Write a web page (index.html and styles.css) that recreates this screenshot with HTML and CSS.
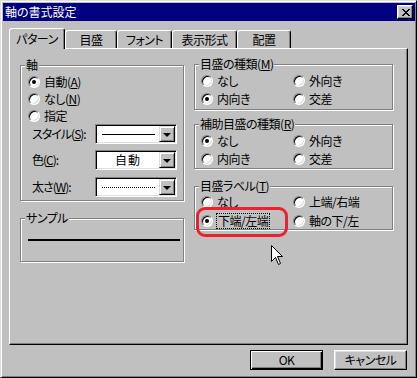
FILE: index.html
```html
<!DOCTYPE html>
<html lang="ja">
<head>
<meta charset="utf-8">
<title>軸の書式設定</title>
<link rel="stylesheet" href="styles.css">
</head>
<body>
<div class="window">
  <div class="titlebar">
    <span class="title">軸の書式設定</span>
    <span class="close">
      <svg width="8" height="7" viewBox="0 0 8 7"><path d="M0 0h2v1h-2zM6 0h2v1h-2zM1 1h2v1h-2zM5 1h2v1h-2zM2 2h4v1h-4zM3 3h2v1h-2zM2 4h4v1h-4zM1 5h2v1h-2zM5 5h2v1h-2zM0 6h2v1h-2zM6 6h2v1h-2z" fill="#000"/></svg>
    </span>
  </div>
  <div class="body">
    <div class="tabs">
      <div class="tab active w56">パターン</div>
      <div class="tab w52">目盛</div>
      <div class="tab w55">フォント</div>
      <div class="tab w65">表示形式</div>
      <div class="tab w54">配置</div>
    </div>
    <div class="panel">
      <div class="col-left">
        <div class="group g-axis">
          <span class="legend">軸</span>
          <div class="radio-row"><span class="rb checked"></span><span>自動(<u>A</u>)</span></div>
          <div class="radio-row"><span class="rb"></span><span>なし(<u>N</u>)</span></div>
          <div class="radio-row"><span class="rb"></span><span>指定</span></div>
          <div class="field"><span class="flabel">スタイル(<u>S</u>):</span>
            <span class="combo"><span class="cval"><span class="line-solid"></span></span><span class="drop"><span class="arrow"></span></span></span>
          </div>
          <div class="field f2"><span class="flabel">色(<u>C</u>):</span>
            <span class="combo"><span class="cval">自動</span><span class="drop"><span class="arrow"></span></span></span>
          </div>
          <div class="field f3"><span class="flabel">太さ(<u>W</u>):</span>
            <span class="combo"><span class="cval"><span class="line-dot"></span></span><span class="drop"><span class="arrow"></span></span></span>
          </div>
        </div>
        <div class="group g-sample">
          <span class="legend">サンプル</span>
          <div class="sample-line"></div>
        </div>
      </div>
      <div class="col-right">
        <div class="group g-r g1">
          <span class="legend">目盛の種類(<u>M</u>)</span>
          <div class="grid2">
            <div class="radio-row r18"><span class="rb"></span><span>なし</span></div>
            <div class="radio-row r18"><span class="rb"></span><span>外向き</span></div>
            <div class="radio-row r18"><span class="rb checked"></span><span>内向き</span></div>
            <div class="radio-row r18"><span class="rb"></span><span>交差</span></div>
          </div>
        </div>
        <div class="group g-r g2">
          <span class="legend">補助目盛の種類(<u>R</u>)</span>
          <div class="grid2">
            <div class="radio-row r18"><span class="rb checked"></span><span>なし</span></div>
            <div class="radio-row r18"><span class="rb"></span><span>外向き</span></div>
            <div class="radio-row r18"><span class="rb"></span><span>内向き</span></div>
            <div class="radio-row r18"><span class="rb"></span><span>交差</span></div>
          </div>
        </div>
        <div class="group g-r g3">
          <span class="legend">目盛ラベル(<u>T</u>)</span>
          <div class="grid2 gap1">
            <div class="radio-row r18"><span class="rb"></span><span>なし</span></div>
            <div class="radio-row r18"><span class="rb"></span><span>上端/右端</span></div>
            <div class="radio-row r18"><span class="rb checked"></span><span class="focus">下端/左端</span></div>
            <div class="radio-row r18"><span class="rb"></span><span>軸の下/左</span></div>
          </div>
        </div>
      </div>
      <div class="highlight"></div>
      <svg class="cursor" width="12" height="20" viewBox="0 0 12 20">
        <path d="M0.5 0.5 L0.5 16.5 L4.5 12.5 L7.5 19.5 L9.5 18.5 L6.5 11.5 L11.5 11.5 Z" fill="#fff" stroke="#000" stroke-width="1"/>
      </svg>
    </div>
    <div class="buttons">
      <div class="btn default"><span>OK</span></div>
      <div class="btn">キャンセル</div>
    </div>
  </div>
</div>
</body>
</html>
```
FILE: styles.css
```css
* { box-sizing: border-box; }
html, body { margin: 0; padding: 0; }
body {
  background: #c0c0c0;
  font-family: "Noto Sans CJK JP", "Noto Sans", sans-serif;
  font-size: 12px;
  font-feature-settings: "palt";
  letter-spacing: -0.5px;
  color: #000;
}
u { text-decoration: underline; text-underline-offset: 1px; }

.window {
  width: 417px;
  height: 378px;
  background: #c0c0c0;
  border: 1px solid;
  border-color: #dfdfdf #000 #000 #dfdfdf;
  box-shadow: inset 1px 1px #fff, inset -1px -1px #808080;
  padding: 2px 1px 1px 2px;
  display: flex;
  flex-direction: column;
}

.titlebar {
  height: 18px;
  background: #000080;
  color: #fff;
  display: flex;
  align-items: center;
  justify-content: space-between;
  padding-left: 2px;
  padding-right: 2px;
}
.title { font-size: 12px; line-height: 18px; letter-spacing: 0; }
.close {
  width: 16px;
  height: 14px;
  background: #c0c0c0;
  border: 1px solid;
  border-color: #fff #000 #000 #fff;
  box-shadow: inset -1px -1px #808080, inset 1px 1px #dfdfdf;
  display: flex;
  align-items: center;
  justify-content: center;
  padding-left: 1px;
}
.close svg { display: block; }

.body {
  padding: 7px 7px 0 6px;
  display: flex;
  flex-direction: column;
}

.tabs {
  display: flex;
  align-items: flex-end;
  height: 20px;
  position: relative;
  z-index: 2;
}
.tab {
  height: 18px;
  border-left: 1px solid #fff;
  border-top: 1px solid #fff;
  border-right: 1px solid #000;
  border-radius: 3px 3px 0 0;
  box-shadow: inset -1px 0 #808080;
  background: #c0c0c0;
  display: flex;
  align-items: center;
  justify-content: center;
  line-height: 16px;
  padding-top: 1px;
}
.tab.active {
  height: 21px;
  margin-bottom: -1px;
  padding-bottom: 2px;
}
.w56 { width: 56px; }
.w52 { width: 52px; }
.w55 { width: 55px; }
.w65 { width: 65px; }
.w54 { width: 54px; }

.panel {
  width: 399px;
  height: 297px;
  border: 1px solid;
  border-color: #fff #000 #000 #fff;
  box-shadow: inset -1px -1px #808080;
  padding: 15px 0 0 10px;
  display: flex;
  gap: 10px;
  position: relative;
  z-index: 1;
}

.col-left { width: 164px; margin-top: 1px; display: flex; flex-direction: column; }
.col-right { width: 199px; display: flex; flex-direction: column; }

.group {
  position: relative;
  border: 1px solid #808080;
  box-shadow: inset 1px 1px #fff, 1px 1px #fff;
}
.legend {
  position: absolute;
  top: -8px;
  left: 4px;
  padding: 0 1px;
  background: #c0c0c0;
  line-height: 14px;
  height: 15px;
  white-space: nowrap;
}

.g-axis { height: 136px; padding: 7px 0 0 7px; }
.g-sample { height: 44px; margin-top: 17px; padding: 20px 0 0 7px; }
.sample-line { width: 152px; height: 2px; background: #000; }

.radio-row {
  display: flex;
  align-items: center;
  gap: 4px;
  height: 17px;
  line-height: 14px;
  white-space: nowrap;
}
.radio-row.r18 { height: 18px; }

.rb {
  width: 12px;
  height: 12px;
  flex: none;
  border-radius: 50%;
  background: #fff;
  border: 1px solid;
  border-color: #808080 #fff #fff #808080;
  box-shadow: inset 1px 1px #000, inset -1px -1px #dfdfdf;
  display: flex;
  align-items: center;
  justify-content: center;
}
.rb.checked::after {
  content: "";
  width: 4px;
  height: 4px;
  border-radius: 50%;
  background: #000;
}

.field {
  display: flex;
  align-items: center;
  height: 20px;
  margin-left: 4px;
}
.field.f2 { margin-top: 6px; }
.field.f3 { margin-top: 7px; }
.flabel { width: 63px; line-height: 14px; white-space: nowrap; letter-spacing: -1px; }

.combo {
  width: 82px;
  height: 20px;
  background: #fff;
  border: 1px solid;
  border-color: #808080 #fff #fff #808080;
  box-shadow: inset 1px 1px #000, inset -1px -1px #dfdfdf;
  display: flex;
  padding: 1px;
}
.cval {
  flex: 1;
  display: flex;
  align-items: center;
  justify-content: center;
  line-height: 14px;
  letter-spacing: 1px;
}
.line-solid { width: 53px; height: 1px; background: #000; }
.line-dot { width: 53px; height: 0; border-top: 1px dotted #000; }
.drop {
  width: 16px;
  height: 16px;
  background: #c0c0c0;
  border: 1px solid;
  border-color: #dfdfdf #000 #000 #dfdfdf;
  box-shadow: inset 1px 1px #fff, inset -1px -1px #808080;
  display: flex;
  align-items: center;
  justify-content: center;
}
.arrow {
  width: 0;
  height: 0;
  border-left: 4px solid transparent;
  border-right: 4px solid transparent;
  border-top: 4px solid #000;
  margin-top: 1px;
}

.g-r { padding: 7px 0 0 6px; }
.g1 { height: 46px; }
.g2 { height: 45px; margin-top: 14px; }
.g3 { height: 44px; margin-top: 17px; padding-top: 6px; }
.grid2 {
  display: grid;
  grid-template-columns: 92px 92px;
}
.grid2.gap1 { row-gap: 1px; }

.focus { outline: 1px dotted #000; outline-offset: 0px; padding: 0 1px; }

.highlight {
  position: absolute;
  left: 186px;
  top: 158px;
  width: 92px;
  height: 30px;
  border: 3px solid #e8232f;
  border-radius: 9px;
}
.cursor {
  position: absolute;
  left: 261px;
  top: 196px;
}

.buttons {
  display: flex;
  justify-content: flex-end;
  gap: 11px;
  margin-top: 5px;
  padding-right: 1px;
}
.btn {
  width: 73px;
  height: 20px;
  background: #c0c0c0;
  border: 1px solid;
  border-color: #fff #000 #000 #fff;
  box-shadow: inset -1px -1px #808080, inset 1px 1px #dfdfdf;
  display: flex;
  align-items: center;
  justify-content: center;
  line-height: 14px;
}
.btn.default {
  border: 1px solid #000;
  box-shadow: inset 1px 1px #fff, inset -1px -1px #000, inset -2px -2px #808080;
}
```
